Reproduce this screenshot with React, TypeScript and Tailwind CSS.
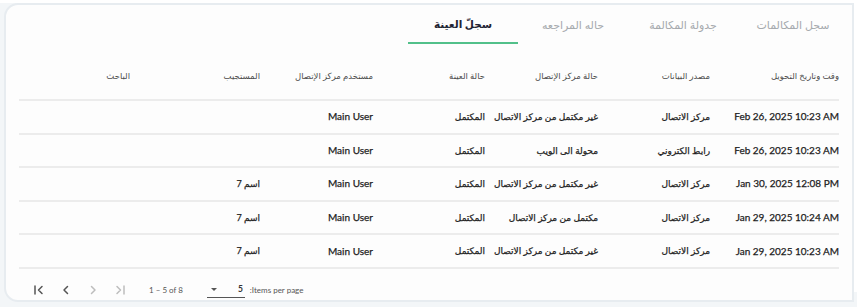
import React from "react";

const cols = [129, 112, 113, 112, 113, 130, 111];
const headers = [
  "وقت وتاريخ التحويل",
  "مصدر البيانات",
  "حالة مركز الإتصال",
  "حالة العينة",
  "مستخدم مركز الإتصال",
  "المستجيب",
  "الباحث",
];
const rows = [
  ["Feb 26, 2025 10:23 AM", "مركز الاتصال", "غير مكتمل من مركز الاتصال", "المكتمل", "Main User", "", ""],
  ["Feb 26, 2025 10:23 AM", "رابط الكتروني", "محولة الى الويب", "المكتمل", "Main User", "", ""],
  ["Jan 30, 2025 12:08 PM", "مركز الاتصال", "غير مكتمل من مركز الاتصال", "المكتمل", "Main User", "اسم 7", ""],
  ["Jan 29, 2025 10:24 AM", "مركز الاتصال", "مكتمل من مركز الاتصال", "المكتمل", "Main User", "اسم 7", ""],
  ["Jan 29, 2025 10:23 AM", "مركز الاتصال", "غير مكتمل من مركز الاتصال", "المكتمل", "Main User", "اسم 7", ""],
];
const tabs = ["سجل المكالمات", "جدولة المكالمة", "حاله المراجعه", "سجلّ العينة"];

const font = { fontFamily: 'Lato, "Open Sans", "DejaVu Sans", sans-serif' };

function Icon({ d, color }: { d: string; color: string }) {
  return (
    <svg width="14" height="14" viewBox="0 0 14 14" fill="none" stroke={color} strokeWidth="1.5" strokeLinecap="round" strokeLinejoin="round">
      <path d={d} />
    </svg>
  );
}

export default function App() {
  return (
    <div className="w-[857px] h-[307px] bg-[#f3f6f8] relative overflow-hidden" style={font}>
      <div className="absolute left-0 top-0 w-[857px] h-[3px] bg-white" />
      <div className="absolute right-0 top-0 w-[5px] h-[292px] bg-white" />
      <div className="relative ml-[4px] mt-[3px] w-[850px] h-[299px] bg-[#fdfdfd] border-2 border-[#e7ecf0] rounded-l-[14px] flex flex-col">
        {/* tabs */}
        <div dir="rtl" className="flex shrink-0 h-[39px] pr-[4px]">
          {tabs.map((t, i) => {
            const active = i === 3;
            return (
              <div
                key={t}
                className={
                  "w-[110px] flex items-center justify-center pt-[3px] border-b-2 " +
                  (active ? "text-[10.5px] text-[#1f2433] font-bold border-[#52c08a]" : "text-[11px] text-[#a6aaae] border-transparent")
                }
              >
                {t}
              </div>
            );
          })}
        </div>
        {/* table */}
        <div dir="rtl" className="px-[13px] flex flex-col shrink-0">
          <div className="flex shrink-0 h-[57px] items-center pt-[10px] border-b-2 border-[#ececec]">
            {headers.map((h, i) => (
              <div key={h} style={{ width: cols[i] }} className="text-[8.5px] text-[#4d4d4d] text-right whitespace-nowrap">
                {h}
              </div>
            ))}
          </div>
          {rows.map((r, ri) => (
            <div key={ri} className="flex shrink-0 h-[33.6px] items-center border-b-2 border-[#ececec]">
              {r.map((c, i) => {
                const latin = i === 0 || i === 4;
                return (
                  <div
                    key={i}
                    style={{ width: cols[i] }}
                    dir={latin ? "ltr" : "rtl"}
                    className={
                      "text-right text-[#1e1e1e] whitespace-nowrap [-webkit-text-stroke:0.25px_#1e1e1e] " +
                      (latin ? "text-[10px]" : "text-[9px]")
                    }
                  >
                    {c}
                  </div>
                );
              })}
            </div>
          ))}
        </div>
        {/* paginator */}
        <div className="flex shrink-0 items-center h-[38px] pt-[4px] pl-[26px] text-[8px] text-[#444]">
          <div className="flex items-center gap-[13px]">
            <Icon d="M3 3v8M10 3.5L6.5 7 10 10.5" color="#555" />
            <Icon d="M8.5 3.5L5 7l3.5 3.5" color="#555" />
            <Icon d="M5.5 3.5L9 7l-3.5 3.5" color="#bdbdbd" />
            <Icon d="M4 3.5L7.5 7 4 10.5M11 3v8" color="#bdbdbd" />
          </div>
          <div className="ml-[22px] text-[#555]">1 – 5 of 8</div>
          <div className="ml-[24px] w-[38px] h-[16px] border-b border-[#555] flex items-center justify-between px-[4px]">
            <span className="w-0 h-0 border-l-[3px] border-r-[3px] border-t-[3px] border-l-transparent border-r-transparent border-t-[#555]" />
            <span className="font-bold text-[8.5px] text-[#333] mr-[-2px]">5</span>
          </div>
          <div className="ml-[5px] text-[#555]">:Items per page</div>
        </div>
      </div>
    </div>
  );
}
